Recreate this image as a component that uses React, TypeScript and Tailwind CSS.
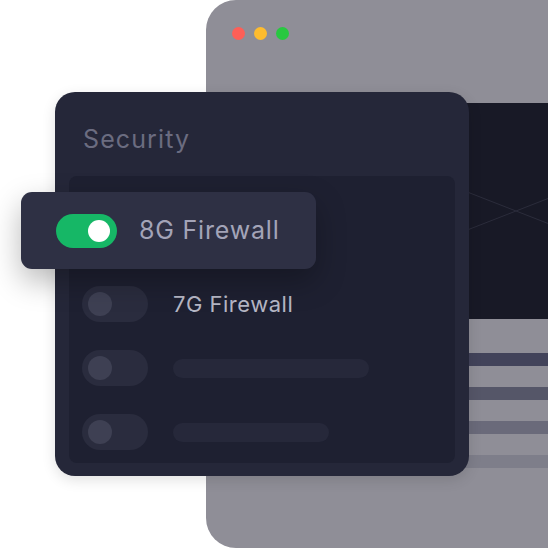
import React from 'react';

const Toggle: React.FC<{ on?: boolean }> = ({ on }) =>
  on ? (
    <div className="w-[61px] h-[34px] rounded-full bg-[#16b766] flex items-center justify-end pr-[7px]">
      <div className="w-[22px] h-[22px] rounded-full bg-white" />
    </div>
  ) : (
    <div className="w-[66px] h-[36px] rounded-full bg-[#2a2c3e] flex items-center pl-[6px]">
      <div className="w-[24px] h-[24px] rounded-full bg-[#3e4053]" />
    </div>
  );

export default function App() {
  return (
    <div
      className="relative w-[548px] h-[548px] bg-white overflow-hidden"
      style={{ fontFamily: 'Inter, "Noto Sans", sans-serif' }}
    >
      {/* Browser window behind */}
      <div className="absolute left-[206px] top-0 w-[420px] h-[548px] bg-[#8f8e97] rounded-l-[30px] pl-[26px] pt-[27px]">
        <div className="flex gap-[9px]">
          <span className="w-[13px] h-[13px] rounded-full bg-[#fe5f57]" />
          <span className="w-[13px] h-[13px] rounded-full bg-[#febc2e]" />
          <span className="w-[13px] h-[13px] rounded-full bg-[#28c840]" />
        </div>
        <div className="mt-[63px] ml-[7px] w-[554px] h-[216px] bg-[#181926]">
          <svg width="554" height="216" viewBox="0 0 554 216">
            <line x1="0" y1="0" x2="554" y2="216" stroke="#2b2c3b" strokeWidth="1" />
            <line x1="0" y1="216" x2="554" y2="0" stroke="#2b2c3b" strokeWidth="1" />
          </svg>
        </div>
        <div className="mt-[34px] ml-[7px] flex flex-col gap-[21px]">
          <div className="h-[13px] bg-[#42435a]" />
          <div className="h-[13px] bg-[#555668]" />
          <div className="h-[13px] bg-[#6a6a7a]" />
          <div className="h-[13px] bg-[#7e7e8a]" />
        </div>
      </div>

      {/* Security card */}
      <div className="absolute left-[55px] top-[92px] w-[414px] h-[384px] bg-[#252739] rounded-[20px] px-[14px] pt-[30px] shadow-[0_4px_14px_rgba(0,0,0,0.12)]">
        <div className="pl-[14px] text-[25px] leading-[34px] text-[#6b6c80] tracking-[1.1px]">Security</div>
        <div className="mt-[20px] h-[287px] rounded-[8px] bg-[#1e2031] pl-[13px] pt-[46px] flex flex-col gap-[28px]">
          <div className="flex items-center gap-[25px] h-[36px]">
            <Toggle />
            <div className="w-[140px] h-[19px] rounded-full bg-[#26283a]" />
          </div>
          <div className="flex items-center gap-[25px] h-[36px]">
            <Toggle />
            <span className="text-[22px] text-[#b6b7c5] tracking-[0.5px]">7G Firewall</span>
          </div>
          <div className="flex items-center gap-[25px] h-[36px]">
            <Toggle />
            <div className="w-[196px] h-[19px] rounded-full bg-[#26283a]" />
          </div>
          <div className="flex items-center gap-[25px] h-[36px]">
            <Toggle />
            <div className="w-[156px] h-[19px] rounded-full bg-[#26283a]" />
          </div>
        </div>
      </div>

      {/* Highlighted row popping out */}
      <div className="absolute left-[21px] top-[192px] w-[295px] h-[77px] rounded-[11px] bg-[#2e3044] flex items-center pl-[35px] gap-[22px] shadow-[0_12px_30px_rgba(0,0,0,0.28)]">
        <Toggle on />
        <span className="text-[25px] text-[#a3a4b8] tracking-[0.8px]">8G Firewall</span>
      </div>
    </div>
  );
}
